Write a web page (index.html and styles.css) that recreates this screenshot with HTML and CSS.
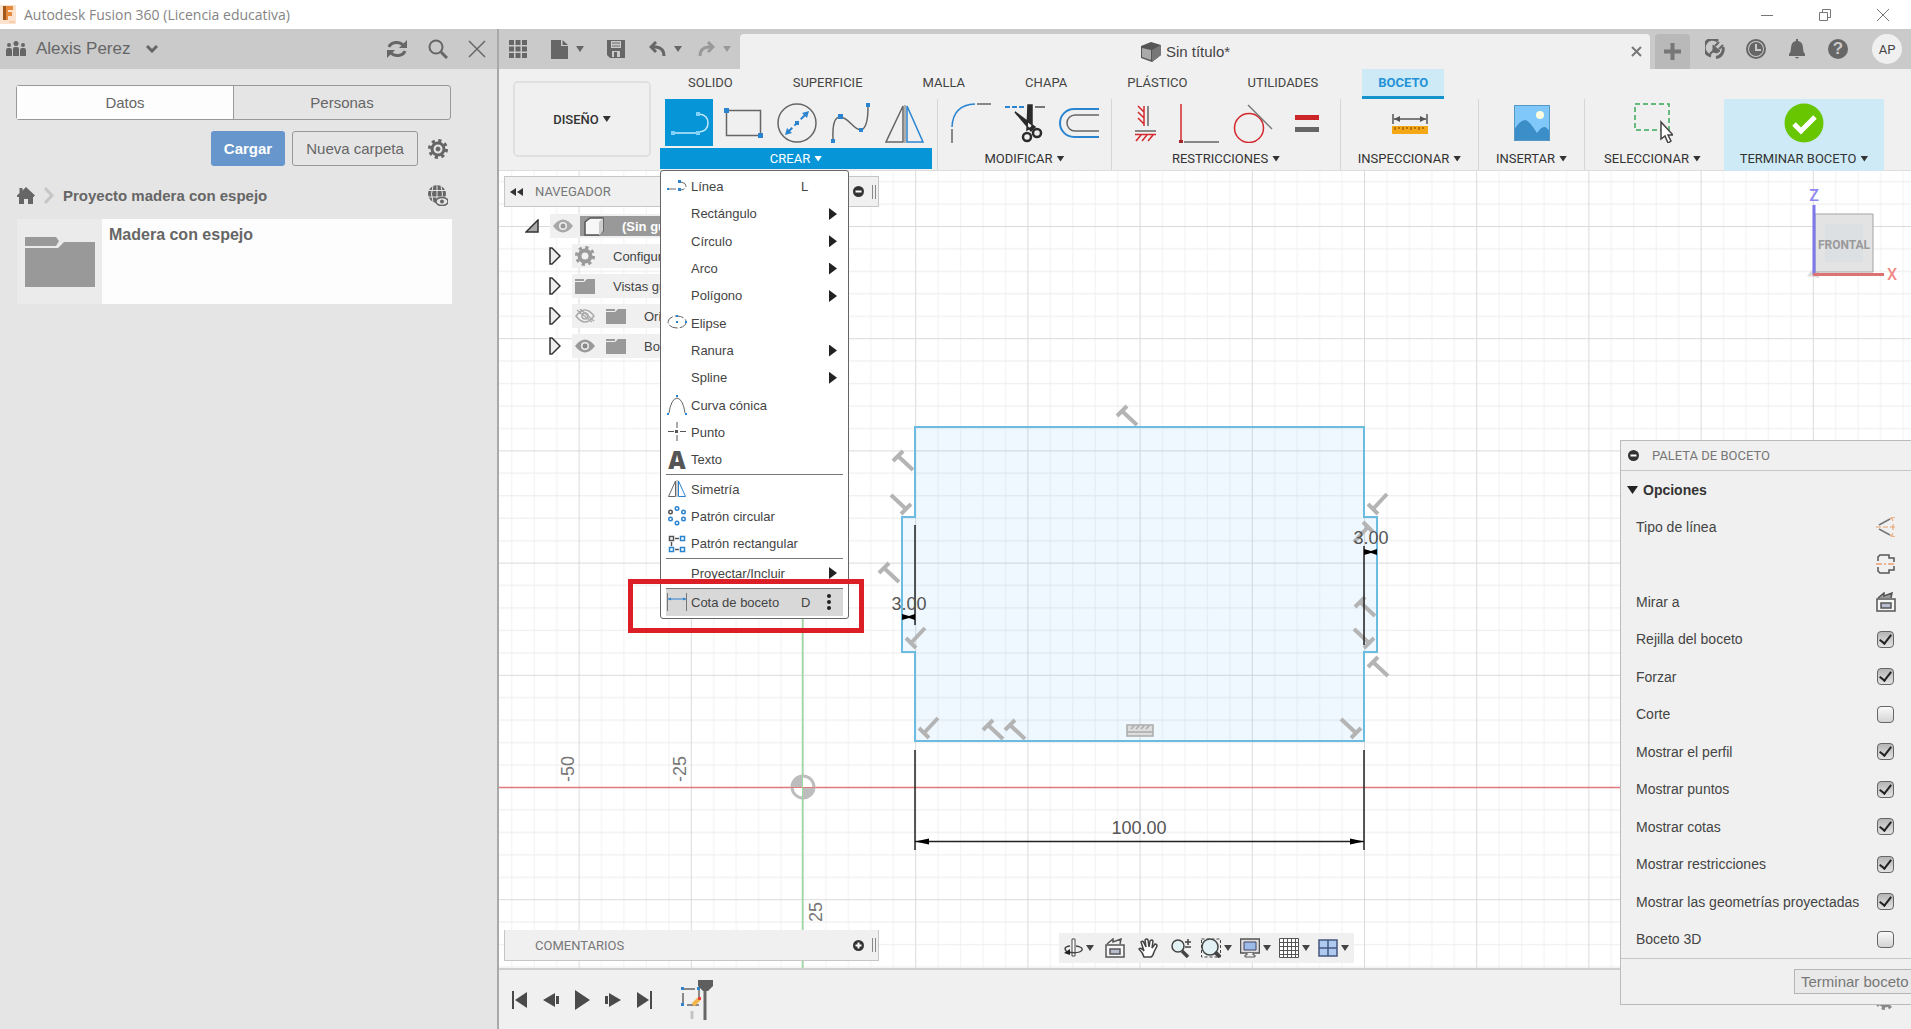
FILE: index.html
```html
<!DOCTYPE html>
<html lang="es">
<head>
    <meta charset="UTF-8">
    <meta name="viewport" content="width=device-width, initial-scale=1.0">
    <title>Autodesk Fusion 360</title>
    <link rel="stylesheet" href="styles.css">
</head>
<body>
    <header class="titlebar">
        <svg class="app-icon" width="16" height="19" viewBox="0 0 16 19"><rect width="16" height="19" fill="#fbe3cf"/><path d="M3 1h10v4H8v2h4v4H8v4H3z" fill="#e58a3c"/><path d="M3 1h3v14H3z" fill="#a4571b"/><path d="M9 17h6" stroke="#f0b98a"/></svg>
        <h1>Autodesk Fusion 360 (Licencia educativa)</h1>
        <div class="window-buttons">
            <button aria-label="Minimizar"><svg width="14" height="14"><path d="M1 7.500h12" stroke="#777"/></svg></button>
            <button aria-label="Restaurar"><svg width="14" height="14" fill="none" stroke="#777"><path d="M1.500 4.500h8v8h-8zM4.500 4V1.500h8v8H10"/></svg></button>
            <button aria-label="Cerrar"><svg width="14" height="14" stroke="#777"><path d="M1 1l12 12M13 1L1 13"/></svg></button>
        </div>
    </header>

    <div class="main">
        <aside class="data-panel">
            <div class="panel-top">
                <svg width="20" height="16" viewBox="0 0 20 16" fill="#666"><circle cx="3" cy="4" r="2"/><circle cx="10" cy="2.500" r="2.500"/><circle cx="17" cy="4" r="2"/><path d="M0 15V9q0-2 2-2h2q2 0 2 2v6zM7 15V8q0-2 2-2h2q2 0 2 2v7zM14 15V9q0-2 2-2h2q2 0 2 2v6z"/></svg>
                <button class="user">Alexis Perez <svg width="12" height="8" fill="none" stroke="#666" stroke-width="3"><path d="M1 1l5 5 5-5"/></svg></button>
                <button aria-label="Actualizar"><svg width="22" height="20" viewBox="0 0 22 20" fill="none" stroke="#666" stroke-width="3"><path d="M3 8a8 6.500 0 0 1 14-2M19 12a8 6.500 0 0 1-14 2"/><path d="M21 1v8h-8zM1 19v-8h8z" fill="#666" stroke="none"/></svg></button>
                <button aria-label="Buscar"><svg width="20" height="20" fill="none" stroke="#666"><circle cx="8" cy="8" r="6.500" stroke-width="2"/><path d="M13 13l6 6" stroke-width="3"/></svg></button>
                <button aria-label="Cerrar panel"><svg width="18" height="18" stroke="#666" stroke-width="1.500"><path d="M1 1l16 16M17 1L1 17"/></svg></button>
            </div>
            <div class="panel-tabs">
                <button class="active">Datos</button>
                <button>Personas</button>
            </div>
            <div class="panel-actions">
                <button class="upload">Cargar</button>
                <button class="new-folder">Nueva carpeta</button>
                <button aria-label="Ajustes"><svg width="20" height="20" viewBox="-10 -10 20 20" fill="none" stroke="#666"><circle r="6" stroke-width="3"/><circle r="8.500" stroke-width="3" stroke-dasharray="3.200 3.480"/><circle r="2" fill="#666"/></svg></button>
            </div>
            <nav class="breadcrumb">
                <a href="#" aria-label="Inicio"><svg width="18" height="17" fill="#666"><path d="M9 0l9 8.500-1.500 1.500H16v7h-5v-5H7v5H2v-7H0V8.500L2.500 6V1h3v2.500z"/></svg></a>
                <svg width="10" height="17" fill="none" stroke="#c6c6c6" stroke-width="3"><path d="M1 1l7 7.500-7 7.500"/></svg>
                <a href="#">Proyecto madera con espejo</a>
                <svg class="globe" width="20" height="21" fill="none" stroke="#666" stroke-width="2"><circle cx="9" cy="9" r="8" fill="#666"/><path d="M9 0v18M0 5.500h18M0 12h18M5 1q-3 8 0 16M13 1q3 8 0 16" stroke="#e5e5e5" stroke-width="1"/><ellipse cx="14" cy="16.500" rx="6" ry="4" fill="#e5e5e5" stroke-width="1.500"/><circle cx="14" cy="16.500" r="2" fill="#666" stroke="none"/></svg>
            </nav>
            <a href="#" class="folder-card">
                <span class="thumb"><svg width="70" height="51" fill="#999"><path d="M0 1h31l3 4-3 5H0zM0 12h33l6-6h31v45H0z"/></svg></span>
                <span class="folder-name">Madera con espejo</span>
            </a>
        </aside>

        <section class="workspace">
            <div class="quick-bar">
                <div class="quick-tools">
                    <button aria-label="Panel de datos"><svg width="18" height="18" stroke="#666" stroke-width="5" stroke-dasharray="5 1.500"><path d="M0 2.500h18M0 9h18M0 15.500h18"/></svg></button>
                    <button class="q-file" aria-label="Archivo"><svg width="17" height="19" fill="#666"><path d="M0 0h10v6h7v13H0zM11.500 0l5.500 5h-5.500z"/></svg><span class="caret"></span></button>
                    <button class="q-save" aria-label="Guardar"><svg width="18" height="18"><path d="M0 0h18v18H3l-3-3z" fill="#666"/><path d="M4 1h10v7H4z" fill="#cacaca"/><path d="M5 3h8M5 6h8" stroke="#666" stroke-width="1"/><path d="M5 11h8v6H5z" fill="#cacaca"/><path d="M7 12h3v5H7z" fill="#666"/></svg></button>
                    <button class="q-undo" aria-label="Deshacer"><svg width="17" height="16" fill="none" stroke="#666" stroke-width="3"><path d="M7 1L2 6l5 5M2 6h5q8 1 8 9"/></svg><span class="caret"></span></button>
                    <button class="q-redo" aria-label="Rehacer"><svg width="17" height="16" fill="none" stroke="#999" stroke-width="3"><path d="M10 1l5 5-5 5M15 6h-5q-8 1-8 9"/></svg><span class="caret"></span></button>
                </div>
                <div class="doc-tab">
                    <span class="doc-title">
                        <svg width="20" height="20"><path d="M0 4l10-4 10 3v10l-9 7L0 16z" fill="#555"/><path d="M1 6l9 2v10L1 15z" fill="#aaa"/><path d="M11 8l9-5v10l-9 7z" fill="#777"/></svg>
                        Sin título*
                    </span>
                    <button aria-label="Cerrar documento"><svg width="11" height="11" stroke="#777" stroke-width="2"><path d="M1 1l9 9M10 1l-9 9"/></svg></button>
                </div>
                <button class="add-tab" aria-label="Nuevo"><svg width="17" height="17" stroke="#777" stroke-width="4"><path d="M8.500 0v17M0 8.500h17"/></svg></button>
                <div class="quick-right">
                    <button aria-label="Extensiones"><svg width="20" height="20" fill="none" stroke="#666"><path d="M6 17a8.500 8.500 0 1 1 7-15M18 8a8.500 8.500 0 0 1-7 10.500" stroke-width="3"/><path d="M5 15l4-4M14 3l-4 4M18 6l-4 4" stroke-width="2"/><path d="M8 6l7 6-3 2-4-1z" fill="#666"/></svg></button>
                    <button aria-label="Estado de trabajos"><svg width="20" height="20" fill="none" stroke="#666"><circle cx="10" cy="10" r="9" stroke-width="2"/><circle cx="10" cy="10" r="7" fill="#666" stroke="none"/><path d="M10 5v6h5" stroke="#cacaca" stroke-width="2"/></svg></button>
                    <button aria-label="Notificaciones"><svg width="20" height="20" fill="#666"><path d="M9 0h2v2q5 1 5 7 0 4 2 6v2H2v-2q2-2 2-6 0-6 5-7zM8 18h4q-2 3-4 0z"/></svg></button>
                    <button aria-label="Ayuda" class="help"><span>?</span></button>
                    <button class="avatar">AP</button>
                </div>
            </div>

            <div class="ribbon">
                <button class="design">DISEÑO <span class="caret"></span></button>
                <div class="ribbon-body">
                    <nav class="ribbon-tabs">
                        <button>SOLIDO</button>
                        <button>SUPERFICIE</button>
                        <button>MALLA</button>
                        <button>CHAPA</button>
                        <button>PLÁSTICO</button>
                        <button>UTILIDADES</button>
                        <button class="active">BOCETO</button>
                    </nav>
                    <div class="groups">
                        <div class="group create">
                            <div class="tools">
                                <button class="active" aria-label="Línea"><svg width="40" height="40" fill="none" stroke="#c4e8fb" stroke-width="1.500"><path d="M4 30h24M30 11q9 1 9 9t-9 9"/><path d="M2 28h4v4H2zM27 28h4v4h-4zM27 9h4v4h-4z" fill="#7fd0fb" stroke="none"/></svg></button>
                                <button aria-label="Rectángulo"><svg width="40" height="40"><path d="M3.500 7.500h34v25h-34z" fill="none" stroke="#666" stroke-width="1.500"/><path d="M1 5h5v5H1zM35 30h5v5h-5z" fill="#2a84d0"/></svg></button>
                                <button aria-label="Círculo"><svg width="40" height="40"><circle cx="20" cy="20" r="19" fill="none" stroke="#666" stroke-width="1.500"/><path d="M11 29l18-18" stroke="#2a84d0" stroke-width="2" stroke-dasharray="6 3"/><path d="M18 18h4v4h-4zM32 8l-2 7-5-5zM8 32l2-7 5 5z" fill="#2a84d0"/></svg></button>
                                <button aria-label="Spline"><svg width="40" height="40"><path d="M2 36Q1 14 9 14C18 14 22 27 30 27Q37 25 37 4" fill="none" stroke="#666" stroke-width="1.500"/><path d="M0 36h4v4H0zM7 11h5v5H7zM28 25h4v4h-4zM35 0h4v4h-4z" fill="#2a84d0"/></svg></button>
                                <button aria-label="Simetría"><svg width="40" height="40" fill="none" stroke-width="1.500"><path d="M18 3v36H1z" stroke="#666"/><path d="M22 3v36h16z" stroke="#2a84d0"/><path d="M20 2v38" stroke="#999"/></svg></button>
                            </div>
                            <button class="group-label">CREAR<span class="caret"></span></button>

                            <div class="menu">
                                <button><svg width="20" height="20" fill="none" stroke="#666"><path d="M1 12h11M14 5q5 1 5 4t-5 4" stroke-dasharray="8 2"/><path d="M0 11h2v2H0zM11 11h3v3h-3zM11 3h3v3h-3z" fill="#2a84d0" stroke="none"/></svg><span>Línea</span><kbd>L</kbd></button>
                                <button class="sub"><i></i><span>Rectángulo</span></button>
                                <button class="sub"><i></i><span>Círculo</span></button>
                                <button class="sub"><i></i><span>Arco</span></button>
                                <button class="sub"><i></i><span>Polígono</span></button>
                                <button><svg width="20" height="20" fill="none" stroke="#666"><ellipse cx="10" cy="9" rx="9" ry="6" stroke-dasharray="9 2"/><path d="M9 2h2v2H9zM9 8h2v2H9zM18 8h2v2h-2z" fill="#2a84d0" stroke="none"/></svg><span>Elipse</span></button>
                                <button class="sub"><i></i><span>Ranura</span></button>
                                <button class="sub"><i></i><span>Spline</span></button>
                                <button><svg width="20" height="20" fill="none" stroke="#666"><path d="M2 18Q4 4 10 3q6 1 8 15"/><path d="M9 0h2v2H9zM0 18h2v2H0zM18 18h2v2h-2z" fill="#2a84d0" stroke="none"/></svg><span>Curva cónica</span></button>
                                <button><svg width="20" height="20" stroke="#555"><path d="M10 0v6M10 13v6M1 9.500h6M13 9.500h6"/><path d="M8 8h3v3H8z" fill="#555" stroke="none"/></svg><span>Punto</span></button>
                                <button><b class="letter">A</b><span>Texto</span></button>
                                <hr>
                                <button><svg width="20" height="20" fill="none"><path d="M8.500 2v15.500H1.500z" stroke="#666"/><path d="M11.500 2v15.500h7z" stroke="#2a84d0"/><path d="M10 1v17" stroke="#999"/></svg><span>Simetría</span></button>
                                <button><svg width="20" height="20" fill="none" stroke="#2a84d0" stroke-width="1.500"><circle cx="10" cy="2.500" r="1.750"/><circle cx="16.500" cy="6" r="1.750"/><circle cx="16.500" cy="13" r="1.750"/><circle cx="10" cy="17" r="1.750"/><circle cx="3.500" cy="13" r="1.750"/><circle cx="3.500" cy="6" r="1.750" stroke="#555"/></svg><span>Patrón circular</span></button>
                                <button><svg width="20" height="20" fill="none" stroke="#2a84d0" stroke-width="1.500"><path d="M13.500 2.500h4v4h-4zM13.500 13.500h4v4h-4zM2.500 13.500h4v4h-4z"/><path d="M2.500 2.500h4v4h-4zM8 4.500h4M8 15.500h4M4.500 8v4" stroke="#555"/></svg><span>Patrón rectangular</span></button>
                                <hr>
                                <button class="sub"><i></i><span>Proyectar/Incluir</span></button>
                                <hr>
                                <button class="hover"><svg width="20" height="20" fill="none"><path d="M.5 1v18M19.500 1v18" stroke="#777"/><path d="M1 7h18" stroke="#2a84d0"/><path d="M4 5.500L1 7l3 1.500M16 5.500L19 7l-3 1.500" fill="#2a84d0"/></svg><span>Cota de boceto</span><kbd>D</kbd><svg class="dots" width="4" height="16" fill="#222"><circle cx="2" cy="2" r="2"/><circle cx="2" cy="8" r="2"/><circle cx="2" cy="14" r="2"/></svg></button>
                                <div class="highlight"></div>
                            </div>
                        </div>

                        <div class="group modify">
                            <div class="tools">
                                <button aria-label="Empalme"><svg width="40" height="40" fill="none" stroke-width="1.500"><path d="M1 24Q2 2 24 1" stroke="#2a84d0"/><path d="M1 26v14M26 1h14" stroke="#666"/></svg></button>
                                <button aria-label="Recortar"><svg width="40" height="40" fill="none"><path d="M0 4h21" stroke="#2a84d0" stroke-width="2" stroke-dasharray="5 2"/><path d="M30 4h10" stroke="#777" stroke-width="2"/><path d="M10 9l16 19 4-4L10 9zM23 2h4v22l-5 3z" fill="#2b2b2b" stroke="#2b2b2b" stroke-width="1.500"/><circle cx="22" cy="34" r="4" stroke="#2b2b2b" stroke-width="2.500"/><circle cx="32" cy="30" r="4" stroke="#2b2b2b" stroke-width="2.500"/></svg></button>
                                <button aria-label="Desfase"><svg width="40" height="40" fill="none" stroke-width="2"><path d="M40 6H15a14 14 0 0 0 0 28h25" stroke="#2a84d0"/><path d="M40 12H16a8 8 0 0 0 0 16h24" stroke="#666" stroke-width="1.500"/></svg></button>
                            </div>
                            <button class="group-label">MODIFICAR <span class="caret"></span></button>
                        </div>

                        <div class="group constraints">
                            <div class="tools">
                                <button aria-label="Horizontal/Vertical"><svg width="40" height="40" fill="none" stroke="#d3282e" stroke-width="1.500"><path d="M19 3v20M19 9l-6-6M19 15l-6-6M19 21l-6-6M10 31.500h21M16 32l-5 6M22 32l-5 6M28 32l-5 6"/><path d="M23 3v20M10 28h21" stroke="#666"/></svg></button>
                                <button aria-label="Coincidente"><svg width="40" height="40"><path d="M2 1v36" stroke="#d3282e" stroke-width="1.500"/><path d="M5 39h35" stroke="#666" stroke-width="1.500"/><path d="M0 37h4v4H0z" fill="#a3262b"/></svg></button>
                                <button aria-label="Tangente"><svg width="40" height="40" fill="none"><circle cx="16" cy="25" r="14.500" stroke="#d3282e" stroke-width="1.500"/><path d="M15 2l24 24" stroke="#777" stroke-width="1.500"/></svg></button>
                                <button aria-label="Igual"><svg width="40" height="40"><path d="M8 12h24v5H8z" fill="#cc2529"/><path d="M8 24h24v5H8z" fill="#666"/></svg></button>
                            </div>
                            <button class="group-label">RESTRICCIONES <span class="caret"></span></button>
                        </div>

                        <div class="group inspect">
                            <div class="tools">
                                <button aria-label="Medir"><svg width="40" height="40"><path d="M3 11v10M37 11v10M4 16h32" stroke="#555" stroke-width="1.500"/><path d="M4 16l6-3v6zM36 16l-6-3v6z" fill="#555"/><path d="M2 23h36v8H2z" fill="#f5a816"/><path d="M5 24v3M9 24v2M13 24v3M17 24v2M21 24v3M25 24v2M29 24v3M33 24v2" stroke="#6b4300"/></svg></button>
                            </div>
                            <button class="group-label">INSPECCIONAR <span class="caret"></span></button>
                        </div>

                        <div class="group insert">
                            <div class="tools">
                                <button aria-label="Insertar imagen"><svg width="40" height="40"><path d="M2 2h36v36H2z" fill="#80c8fa"/><path d="M2 27q6-10 11-10 4 0 12 13 4-6 7-6t6 5v9H2z" fill="#3c8ec8"/><circle cx="28" cy="12" r="4" fill="#fdfbe0"/><path d="M2.500 2.500h35v35h-35z" fill="none" stroke="#5597c5"/></svg></button>
                            </div>
                            <button class="group-label">INSERTAR <span class="caret"></span></button>
                        </div>

                        <div class="group select">
                            <div class="tools">
                                <button aria-label="Seleccionar"><svg width="40" height="40"><path d="M2 1h34v26H2z" fill="none" stroke="#38a659" stroke-width="1.500" stroke-dasharray="5 3"/><path d="M28 19v17l4-3 3 7 3-2-3-6h5z" fill="#fff" stroke="#444" stroke-width="1.500"/></svg></button>
                            </div>
                            <button class="group-label">SELECCIONAR <span class="caret"></span></button>
                        </div>

                        <div class="group finish">
                            <div class="tools">
                                <button aria-label="Terminar"><svg width="40" height="40"><circle cx="20" cy="20" r="19.500" fill="#67c600"/><path d="M10 21l7 7 14-14" fill="none" stroke="#fff" stroke-width="5"/></svg></button>
                            </div>
                            <button class="group-label">TERMINAR BOCETO <span class="caret"></span></button>
                        </div>
                    </div>
                </div>
            </div>

            <div class="canvas">
                <svg class="sketch" width="100%" height="100%">
                    <defs>
                        <pattern id="grid" width="112.200" height="112.200" patternUnits="userSpaceOnUse">
                            <path d="M22.900 0v113M45.400 0v113M67.800 0v113M90.300 0v113" stroke="#f1f1f1"/>
                            <path d="M0 22.900h113M0 45.400h113M0 67.800h113M0 90.300h113" stroke="#ebebeb"/>
                            <path d="M.5 0v113M0 .5h113" stroke="#dadada"/>
                        </pattern>
                        <g id="perp"><path d="M-5 5L5-5M0 0l15 14" stroke="#b4b4b4" stroke-width="4"/></g>
                    </defs>
                    <!-- everything below is drawn around the sketch origin -->
                    <g transform="translate(304 616)">
                        <rect x="-304" y="-617" width="3000" height="2000" fill="url(#grid)"/>
                        <path d="M-304 .5H3000" stroke="#e2797d" stroke-width="1.500"/>
                        <path d="M-.5-617V1000" stroke="#9bdb9e" stroke-width="1.500"/>
                        <circle r="11" fill="#fff" stroke="#bdbdbd" stroke-width="3"/>
                        <path d="M0 0V-12A12 12 0 0 0-12 0zM0 0v12A12 12 0 0 0 12 0z" fill="#bdbdbd"/>
                        <path d="M-12 .5h24" stroke="#e2797d"/><path d="M-.5-12v24" stroke="#9bdb9e"/>

                        <path class="profile" d="M112-360H561V-270H574V-135H561V-46H112V-135H99V-270H112Z"/>
                        <use href="#perp" x="319" y="-376"/>
                        <use href="#perp" x="95" y="-331"/>
                        <use href="#perp" x="81" y="-219"/>
                        <use href="#perp" x="557" y="-185"/>
                        <use href="#perp" x="570" y="-125"/>
                        <use href="#perp" x="185" y="-62"/>
                        <use href="#perp" x="207" y="-62"/>
                        <use href="#perp" transform="translate(103 -278) rotate(180)"/>
                        <use href="#perp" transform="translate(566 -144) rotate(180)"/>
                        <use href="#perp" transform="translate(553 -54) rotate(180)"/>
                        <use href="#perp" transform="translate(108 -144) rotate(-90)"/>
                        <use href="#perp" transform="translate(570 -278) rotate(-90)"/>
                        <use href="#perp" transform="translate(121 -54) rotate(-90)"/>
                        <use href="#perp" transform="translate(565 -260) rotate(90)"/>
                        <path d="M324-62h26v11h-26zM324-55h26M328-58l3-3M333-58l3-3M338-58l3-3M343-58l3-3" fill="#ddd" stroke="#aaa" stroke-width="1.500"/>

                        <g stroke="#222" stroke-width="1.500">
                            <path d="M112-262v100M561-241v99M112-37V63M561-37V63M112 54.500h449M99-170h13M561-235h13"/>
                            <path d="M112 54.500l14-3v6zM561 54.500l-14-3v6zM99-173l7 2 6-2v6l-6-2-7 2zM561-238l7 2 6-2v6l-6-2-7 2z" fill="#000" stroke="none"/>
                        </g>
                        <g class="dims">
                            <text x="106" y="-177">3.00</text>
                            <text x="568" y="-243">3.00</text>
                            <text x="336" y="47">100.00</text>
                        </g>
                        <g class="scale">
                            <text transform="translate(-229 -5) rotate(-90)">-50</text>
                            <text transform="translate(-117 -5) rotate(-90)">-25</text>
                            <text transform="translate(19 135) rotate(-90)">25</text>
                        </g>
                    </g>
                </svg>

                <div class="browser">
                    <div class="bar">
                        <svg width="13" height="8" fill="#333"><path d="M6 0v8L0 4zM13 0v8L7 4z"/></svg>
                        <h2>NAVEGADOR</h2>
                        <button aria-label="Contraer"><svg width="11" height="11"><circle cx="5.500" cy="5.500" r="5.500" fill="#333"/><path d="M2.500 5.500h6" stroke="#fff" stroke-width="2"/></svg></button>
                        <span class="grip"></span>
                    </div>
                    <ul class="tree">
                        <li class="root">
                            <svg class="arrow" width="14" height="14"><path d="M13 1v12H1z" fill="#aaa" stroke="#333" stroke-width="1.500"/></svg>
                            <span class="row"><svg width="20" height="14"><path d="M0 7q10-13 20 0-10 13-20 0z" fill="#a8a8a8"/><circle cx="10" cy="7" r="4" fill="#eee"/><circle cx="10" cy="7" r="2.500" fill="#999"/></svg><b><svg width="20" height="19"><path d="M1 5l5-4h13v13l-4 4H1z" fill="#f7f7f7" stroke="#555" stroke-width="1.500"/><path d="M15 5v13h1l3-4V1z" fill="#ccc"/></svg>(Sin guardar)</b></span>
                        </li>
                        <li>
                            <svg class="arrow" width="12" height="18"><path d="M1 1v16h2l8-8-8-8z" fill="#eee" stroke="#333" stroke-width="1.500"/></svg>
                            <span class="row"><svg width="20" height="20" viewBox="-10 -10 20 20" fill="none" stroke="#999"><circle r="5.500" stroke-width="4"/><circle r="8.500" stroke-width="3" stroke-dasharray="3.200 3.480"/></svg>Configuración</span>
                        </li>
                        <li>
                            <svg class="arrow" width="12" height="18"><path d="M1 1v16h2l8-8-8-8z" fill="#eee" stroke="#333" stroke-width="1.500"/></svg>
                            <span class="row"><svg width="20" height="17" fill="#999"><path d="M0 1h9v2H0zM0 4h9l3-3h8v15H0z"/></svg>Vistas guardadas</span>
                        </li>
                        <li>
                            <svg class="arrow" width="12" height="18"><path d="M1 1v16h2l8-8-8-8z" fill="#eee" stroke="#333" stroke-width="1.500"/></svg>
                            <span class="row"><svg width="20" height="14" fill="none" stroke="#aaa" stroke-width="1.500"><path d="M1 7q9-12 18 0-9 12-18 0zM2 1l15 12M5 0l14 12"/><circle cx="10" cy="7" r="3"/></svg><svg width="20" height="17" fill="#999"><path d="M0 1h9v2H0zM0 4h9l3-3h8v15H0z"/></svg>Origen</span>
                        </li>
                        <li>
                            <svg class="arrow" width="12" height="18"><path d="M1 1v16h2l8-8-8-8z" fill="#eee" stroke="#333" stroke-width="1.500"/></svg>
                            <span class="row"><svg width="20" height="14"><path d="M0 7q10-13 20 0-10 13-20 0z" fill="#999"/><circle cx="10" cy="7" r="4" fill="#eee"/><circle cx="10" cy="7" r="2.500" fill="#888"/></svg><svg width="20" height="17" fill="#999"><path d="M0 1h9v2H0zM0 4h9l3-3h8v15H0z"/></svg>Bocetos</span>
                        </li>
                    </ul>
                </div>

                <svg class="viewcube" width="110" height="110">
                    <path d="M6 90l12-14v16z" fill="#ddd"/>
                    <path d="M14 28h58v58H14z" fill="#e3e3e3" stroke="#a3a3a3"/>
                    <path d="M24 38h38v38H24z" fill="#dde0e3"/>
                    <path d="M13 19v70" stroke="#7d78ea" stroke-width="3"/>
                    <path d="M12 88.500h71" stroke="#dd7272" stroke-width="3"/>
                    <text x="13" y="15" fill="#8d86f2">Z</text>
                    <text x="91" y="94" fill="#f28a8a">X</text>
                    <text class="face" x="43" y="63">FRONTAL</text>
                </svg>

                <div class="bar comments">
                    <h2>COMENTARIOS</h2>
                    <button aria-label="Expandir"><svg width="11" height="11"><circle cx="5.500" cy="5.500" r="5.500" fill="#333"/><path d="M2.500 5.500h6M5.500 2.500v6" stroke="#fff" stroke-width="2"/></svg></button>
                    <span class="grip"></span>
                </div>

                <div class="navbar">
                    <button aria-label="Órbita"><svg width="20" height="20" fill="none" stroke="#444" stroke-width="1.500"><path d="M9 1h3v17H9z" fill="#fff" stroke-width="1"/><path d="M4 14q-5-5 3-6M13 8q7 1 6 4-2 4-15 2"/><path d="M7 11v6l-6-2z" fill="#222" stroke="none"/></svg><span class="caret"></span></button>
                    <button aria-label="Mirar a"><svg width="20" height="20" fill="#f7f7f7" stroke="#555" stroke-width="1.500"><path d="M1 7h18v12H1z"/><path d="M5 11h10v5H5z" fill="#b8bdd0"/><path d="M2 6l6-5v3l8-3-1 5" fill="none"/></svg></button>
                    <button aria-label="Encuadre"><svg width="20" height="20" fill="#fff" stroke="#444" stroke-width="1.500"><path d="M6 19q-1-4-5-8 2-2 5 2L3 4q2-2 3 1l2 4-1-7q2-2 3 0l1 7 1-6q2-2 3 0l-1 7 3-4q2 0 2 2l-3 6q-1 4-3 5z"/></svg></button>
                    <button aria-label="Zoom"><svg width="20" height="20" fill="none" stroke="#444"><circle cx="7" cy="8" r="6" fill="#e2f1f4" stroke-width="1.500"/><path d="M11 13l6 6" stroke-width="3.500"/><path d="M14 4h6M17 1v6M14 9h6" stroke-width="1.500"/></svg></button>
                    <button aria-label="Ventana de zoom"><svg width="20" height="20" fill="none" stroke="#444"><path d="M.5 1h19v18H.5z" stroke-dasharray="3 2"/><circle cx="9" cy="9" r="8" fill="#e2f1f4" stroke-width="1.500"/><path d="M14 14l5 5" stroke-width="4"/></svg><span class="caret"></span></button>
                    <button aria-label="Visualización"><svg width="20" height="20" stroke="#555"><path d="M.5 1h19v14H.5z" fill="#ddd" stroke-width="1.500"/><path d="M4 4h12v8H4z" fill="#9dbbe8" stroke="#446"/><path d="M7 15v2H5v2h10v-2h-2v-2" fill="#eee"/></svg><span class="caret"></span></button>
                    <button aria-label="Rejilla"><svg width="20" height="20" fill="#fff" stroke="#555"><path d="M.5.5h19v19H.5zM4.500 0v20M8.500 0v20M12.500 0v20M16.500 0v20M0 4.500h20M0 8.500h20M0 12.500h20M0 16.500h20"/></svg><span class="caret"></span></button>
                    <button aria-label="Ventanas gráficas"><svg width="20" height="20" fill="#aecaf1" stroke="#44577d" stroke-width="1.500"><path d="M1 2h18v16H1zM10 2v16M1 10h18"/></svg><span class="caret"></span></button>
                </div>

                <form class="palette">
                    <div class="palette-title">
                        <svg width="11" height="11"><circle cx="5.500" cy="5.500" r="5.500" fill="#333"/><path d="M2.500 5.500h6" stroke="#fff" stroke-width="2"/></svg>
                        <h2>PALETA DE BOCETO</h2>
                    </div>
                    <h3><svg width="11" height="8" fill="#222"><path d="M0 0h11L5.500 8z"/></svg>Opciones</h3>
                    <div class="options">
                        <div><span>Tipo de línea</span><button type="button" aria-label="Construcción"><svg width="20" height="20" fill="none" stroke="#777"><path d="M3 8l11-6M3 12l11 6" stroke-width="1.500"/><path d="M0 10h20" stroke="#e9a06b" stroke-dasharray="5 2"/><path d="M14 2l5-2M15 0l2 4M14 18l5 2M15 20l2-4" stroke="#e9a06b"/><path d="M17 7v6" stroke="#e9a06b"/></svg></button></div>
                        <div><button type="button" aria-label="Línea central"><svg width="20" height="20" fill="none" stroke="#555" stroke-width="1.500"><path d="M2 7V3l2-2h9v3h5v4M2 13v4l2 2h9v-3h5v-4"/><path d="M0 10h20" stroke="#e9a06b" stroke-dasharray="6 2 2 2"/></svg></button></div>
                        <div><span>Mirar a</span><button type="button" aria-label="Mirar a"><svg width="20" height="20" fill="#f7f7f7" stroke="#555" stroke-width="1.500"><path d="M1 7h18v12H1z"/><path d="M5 11h10v5H5z" fill="#b8bdd0"/><path d="M2 6l6-5v3l8-3-1 5" fill="#999"/></svg></button></div>
                        <label>Rejilla del boceto<input type="checkbox" checked></label>
                        <label>Forzar<input type="checkbox" checked></label>
                        <label>Corte<input type="checkbox"></label>
                        <label>Mostrar el perfil<input type="checkbox" checked></label>
                        <label>Mostrar puntos<input type="checkbox" checked></label>
                        <label>Mostrar cotas<input type="checkbox" checked></label>
                        <label>Mostrar restricciones<input type="checkbox" checked></label>
                        <label>Mostrar las geometrías proyectadas<input type="checkbox" checked></label>
                        <label>Boceto 3D<input type="checkbox"></label>
                    </div>
                    <div class="palette-foot"><button type="button">Terminar boceto</button></div>
                </form>
            </div>

            <footer class="timeline">
                <button aria-label="Inicio"><svg width="16" height="18" fill="#4a4a4a"><path d="M0 0h2v18H0zM15 1v16L3 9z"/></svg></button>
                <button aria-label="Anterior"><svg width="16" height="18" fill="#4a4a4a"><path d="M12 2v14L0 9zM13 5h3v8h-3z"/></svg></button>
                <button aria-label="Reproducir"><svg width="16" height="20" fill="#4a4a4a"><path d="M1 0v20l15-10z"/></svg></button>
                <button aria-label="Siguiente"><svg width="16" height="18" fill="#4a4a4a"><path d="M4 2v14l12-7zM0 5h3v8H0z"/></svg></button>
                <button aria-label="Fin"><svg width="16" height="18" fill="#4a4a4a"><path d="M14 0h2v18h-2zM1 1v16l12-8z"/></svg></button>
                <svg class="feature" width="34" height="42" fill="none"><path d="M2 10h16v16H2z" stroke="#666" stroke-width="1.500" stroke-dasharray="12 4"/><path d="M0 8h3v3H0zM16 8h3v3h-3zM0 24h3v3H0z" fill="#2a84d0"/><path d="M12 26l6-6" stroke="#f3b54c" stroke-width="4"/><path d="M17 18h3v3h-3z" fill="#e8433f"/><path d="M11 32v8" stroke="#c4c4c4" stroke-width="3"/><path d="M24 8v33" stroke="#666" stroke-width="3"/><path d="M17 1h15v6l-5 5h-5l-5-5z" fill="#5e5e5e"/></svg>
                <button class="settings" aria-label="Ajustes de la línea de tiempo"><svg width="20" height="20" viewBox="-10 -10 20 20" fill="none" stroke="#888"><circle r="6" stroke-width="3"/><circle r="8.500" stroke-width="3" stroke-dasharray="3.200 3.480"/></svg></button>
            </footer>
        </section>
    </div>
</body>
</html>
```

FILE: styles.css
```css
* {
    box-sizing: border-box;
}

body {
    margin: 0;
    height: 100vh;
    display: flex;
    flex-direction: column;
    overflow: hidden;
    font-family: "Liberation Sans", Arial, sans-serif;
    font-size: 13px;
    color: #444;
    background-color: #fff;
}

button {
    display: flex;
    align-items: center;
    justify-content: center;
    padding: 0;
    border: none;
    background: none;
    color: inherit;
    font: inherit;
    cursor: pointer;
}

a {
    color: inherit;
    text-decoration: none;
}

h1, h2, h3 {
    margin: 0;
    font-size: inherit;
    font-weight: normal;
}

svg {
    display: block;
    flex-shrink: 0;
}

.caret {
    width: 8px;
    height: 6px;
    margin-left: 4px;
    background-color: currentColor;
    clip-path: polygon(0 0, 100% 0, 50% 100%);
}

/* window title */
.titlebar {
    display: flex;
    align-items: center;
    height: 29px;
    padding-right: 21px;
}

.titlebar h1 {
    flex: 1;
    padding-left: 8px;
    font-family: "Open Sans", sans-serif;
    font-size: 14px;
    color: #858585;
}

.window-buttons {
    display: flex;
    gap: 44px;
}

.main {
    flex: 1;
    display: flex;
    min-height: 0;
}

/* data panel */
.data-panel {
    flex: 0 0 499px;
    border-right: 2px solid #a9a9a9;
    background-color: #e5e5e5;
    font-size: 15px;
    color: #666;
}

.panel-top {
    display: flex;
    align-items: center;
    gap: 20px;
    height: 40px;
    padding: 0 11px 0 6px;
    background-color: #cacaca;
}

.user {
    flex: 1;
    justify-content: flex-start;
    gap: 16px;
    margin-left: -10px;
    font-size: 17px;
}

.panel-tabs {
    display: flex;
    height: 35px;
    margin: 16px 46px 11px 16px;
    border: 1px solid #999;
    border-radius: 3px;
}

.panel-tabs button {
    flex: 1;
}

.panel-tabs .active {
    border-right: 1px solid #999;
    background-color: #fdfdfd;
}

.panel-actions {
    display: flex;
    justify-content: flex-end;
    gap: 7px;
    height: 35px;
    padding-right: 49px;
}

.upload {
    width: 74px;
    border-radius: 3px;
    background-color: #6696cb;
    color: #fff;
    font-weight: bold;
}

.new-folder {
    width: 126px;
    margin-right: 3px;
    border: 1px solid #999;
    border-radius: 3px;
}

.breadcrumb {
    display: flex;
    align-items: center;
    gap: 9px;
    height: 53px;
    padding: 6px 49px 0 17px;
    font-weight: bold;
}

.globe {
    margin-left: auto;
}

.folder-card {
    display: flex;
    height: 85px;
    margin: 0 45px 0 17px;
    background-color: #fdfdfd;
}

.thumb {
    display: flex;
    align-items: center;
    width: 85px;
    padding-left: 8px;
    background-color: #ebebeb;
}

.folder-name {
    padding: 7px;
    font-size: 16px;
    font-weight: bold;
}

/* workspace */
.workspace {
    flex: 1;
    display: flex;
    flex-direction: column;
    min-width: 0;
}

.quick-bar {
    display: flex;
    align-items: flex-end;
    height: 40px;
    background-color: #cacaca;
    color: #666;
}

.quick-tools {
    display: flex;
    align-items: center;
    width: 241px;
    height: 40px;
    padding-left: 10px;
}

.quick-tools .caret {
    margin-left: 8px;
}

.q-file {
    margin-left: 24px;
}

.q-save {
    margin-left: 23px;
}

.q-undo {
    margin-left: 24px;
}

.q-redo {
    margin-left: 16px;
    color: #999;
}

.doc-tab {
    flex: 1;
    display: flex;
    align-items: center;
    height: 35px;
    padding-right: 8px;
    border-radius: 4px 4px 0 0;
    background-color: #f0f0f0;
}

.doc-title {
    flex: 1;
    display: flex;
    align-items: center;
    justify-content: center;
    gap: 5px;
    font-size: 15px;
    color: #444;
}

.add-tab {
    width: 35px;
    height: 35px;
    margin-left: 5px;
    border-radius: 4px 4px 0 0;
    background-color: #b9b9b9;
}

.quick-right {
    display: flex;
    align-items: center;
    gap: 21px;
    height: 40px;
    padding: 0 9px 0 15px;
}

.help {
    width: 20px;
    height: 20px;
    border-radius: 50%;
    background-color: #666;
    color: #cacaca;
    font-size: 17px;
    font-weight: bold;
}

.avatar {
    width: 30px;
    height: 30px;
    margin-left: 3px;
    border-radius: 50%;
    background-color: #f0f0f0;
    font-family: Roboto, sans-serif;
    color: #444;
}

/* ribbon */
.ribbon {
    display: flex;
    height: 102px;
    border-bottom: 1px solid #ddd;
    background-color: #f0f0f0;
    font-family: Roboto, sans-serif;
}

.design {
    width: 138px;
    height: 76px;
    margin: 12px 9px 0 14px;
    border: 2px solid #e0e0e0;
    border-radius: 5px;
    font-weight: 500;
    color: #333;
}

.ribbon-tabs {
    display: flex;
    gap: 28px;
    padding-left: 12px;
}

.ribbon-tabs button {
    height: 30px;
    padding: 0 16px;
    border-bottom: 3px solid transparent;
}

.ribbon-tabs .active {
    border-bottom-color: #1493cd;
    background-color: #cdeaf6;
    color: #2492d6;
    font-weight: bold;
}

.groups {
    display: flex;
    align-items: flex-start;
}

.group {
    display: flex;
    flex-direction: column;
    gap: 2px;
    height: 71px;
    border-right: 1px solid #d6d6d6;
    color: #333;
}

.tools {
    display: flex;
    justify-content: center;
    gap: 6px;
}

.tools button {
    width: 48px;
    height: 47px;
}

.tools .active {
    background-color: #0696d7;
}

.group-label {
    height: 21px;
}

.create {
    position: relative;
    width: 272px;
    margin-right: 5px;
    border-right: none;
}

.create .tools {
    padding-left: 2px;
}

.create .group-label {
    background-color: #0696d7;
    color: #fff;
}

.modify {
    width: 175px;
    border-left: 1px solid #d6d6d6;
}

.constraints {
    width: 229px;
}

.inspect {
    width: 138px;
}

.insert {
    width: 106px;
}

.select {
    width: 135px;
    border-right: none;
}

.finish {
    width: 160px;
    height: 72px;
    margin-left: 4px;
    border-right: none;
    background-color: #cdeaf6;
}

/* create menu */
.menu {
    position: absolute;
    top: 71px;
    left: 0;
    z-index: 10;
    display: flex;
    flex-direction: column;
    width: 189px;
    height: 449px;
    padding: 2px 5px;
    border: 1px solid #666;
    border-radius: 3px;
    background-color: #fff;
    font-family: "Liberation Sans", Arial, sans-serif;
    color: #444;
}

.menu button {
    flex: 1;
    justify-content: flex-start;
    gap: 4px;
    padding-left: 1px;
}

.menu i,
.menu .letter {
    width: 20px;
    text-align: center;
}

.menu .letter {
    font-family: "Open Sans", sans-serif;
    font-size: 24px;
    font-weight: 800;
    line-height: 20px;
    color: #555;
}

.menu span {
    flex: 1;
    text-align: left;
    white-space: nowrap;
}

.menu kbd {
    width: 12px;
    margin-right: 30px;
    font: inherit;
    text-align: left;
}

.menu .sub::after {
    content: "";
    width: 8px;
    height: 12px;
    margin-right: 6px;
    background-color: #222;
    clip-path: polygon(0 0, 100% 50%, 0 100%);
}

.menu hr {
    width: 100%;
    height: 1px;
    margin: 1px 0 0;
    border: none;
    background-color: #777;
}

.menu .hover {
    background-color: #d8d8d8;
}

.menu .hover kbd {
    margin-right: 10px;
}

.menu .dots {
    margin-right: 12px;
}

.highlight {
    position: absolute;
    top: 408px;
    left: -33px;
    width: 236px;
    height: 54px;
    border: 5px solid #dc1f26;
}

/* canvas */
.canvas {
    position: relative;
    flex: 1;
    border-bottom: 2px solid #cfcfcf;
}

.sketch {
    position: absolute;
    inset: 0;
}

.profile {
    fill: rgba(30, 150, 250, 0.07);
    stroke: #6bbce0;
    stroke-width: 2px;
}

.dims text {
    font-size: 18px;
    text-anchor: middle;
    fill: #555;
}

.scale text {
    font-size: 18px;
    fill: #777;
}

.bar {
    display: flex;
    align-items: center;
    height: 31px;
    padding: 0 2px 0 5px;
    border: 1px solid #c6c6c6;
    background-color: #f0f0f0;
    font-family: Roboto, sans-serif;
    font-size: 13px;
    color: #777;
}

.bar h2 {
    flex: 1;
    padding-left: 12px;
}

.grip {
    width: 4px;
    height: 14px;
    margin-left: 8px;
    border: solid #888;
    border-width: 0 1px;
}

.browser {
    position: absolute;
    top: 5px;
    left: 5px;
    width: 375px;
}

.comments {
    position: absolute;
    bottom: 7px;
    left: 5px;
    width: 375px;
    border-top: none;
}

.comments h2 {
    padding-left: 25px;
}

.tree {
    width: 158px;
    margin: 7px 0 0;
    padding: 0;
    list-style: none;
}

.tree li {
    display: flex;
    align-items: center;
    gap: 11px;
    height: 24px;
    margin-bottom: 6px;
    padding-left: 45px;
}

.tree .root {
    padding-left: 21px;
}

.row {
    flex: 1;
    display: flex;
    align-items: center;
    gap: 11px;
    height: 24px;
    min-width: 0;
    padding-left: 3px;
    overflow: hidden;
    background-color: #f0f0f0;
    white-space: nowrap;
}

.row svg:last-of-type {
    margin-right: 7px;
}

.root .row {
    gap: 0;
}

.row b {
    flex: 1;
    display: flex;
    align-items: center;
    gap: 11px;
    height: 20px;
    padding-left: 4px;
    background-color: #999;
    color: #fff;
}

.viewcube {
    position: absolute;
    top: 15px;
    right: 0;
    font-family: Roboto, sans-serif;
    font-size: 16px;
    font-weight: 500;
    text-anchor: middle;
}

.face {
    font-size: 12px;
    font-weight: bold;
    fill: #999;
}

.navbar {
    position: absolute;
    bottom: 5px;
    left: 560px;
    display: flex;
    align-items: center;
    gap: 8px;
    height: 30px;
    padding: 0 5px 0 4px;
    background-color: #f0f0f0;
}

.navbar button {
    min-width: 25px;
}

.navbar .caret {
    margin-left: 3px;
}

/* sketch palette */
.palette {
    position: absolute;
    top: 269px;
    right: 0;
    z-index: 5;
    width: 291px;
    border: 1px solid #bbb;
    border-right: none;
    background-color: #f0f0f0;
    font-size: 14px;
}

.palette-title {
    display: flex;
    align-items: center;
    gap: 13px;
    height: 30px;
    padding-left: 7px;
    border-bottom: 1px solid #c6c6c6;
    font-family: Roboto, sans-serif;
    font-size: 13px;
    color: #777;
}

.palette h3 {
    display: flex;
    align-items: center;
    gap: 5px;
    height: 37px;
    padding-left: 6px;
    font-weight: bold;
    color: #333;
}

.options {
    display: grid;
    grid-template-rows: repeat(12, 1fr);
    height: 450px;
    padding: 0 15px;
}

.options div,
.options label {
    display: flex;
    align-items: center;
    justify-content: space-between;
}

.options button {
    margin-left: auto;
}

.options input {
    appearance: none;
    width: 17px;
    height: 17px;
    margin: 0 2px 0 0;
    border: 1px solid #666;
    border-radius: 4px;
    background-image: linear-gradient(#fafafa, #d3d3d3);
}

.options input:checked {
    display: flex;
    justify-content: center;
    background-image: linear-gradient(#b5b5b5, #e3e3e3);
}

.options input:checked::after {
    content: "";
    width: 5px;
    height: 10px;
    border: solid #222;
    border-width: 0 2px 2px 0;
    transform: rotate(38deg);
}

.palette-foot {
    height: 46px;
    padding: 10px 0 0 173px;
    overflow: hidden;
    border-top: 1px solid #c6c6c6;
}

.palette-foot button {
    height: 25px;
    padding: 0 6px;
    border: 1px solid #b5b5b5;
    background-color: #e9e9e9;
    font-size: 15px;
    white-space: nowrap;
    color: #777;
}

/* timeline */
.timeline {
    display: flex;
    align-items: center;
    gap: 15px;
    height: 59px;
    padding: 0 16px 0 13px;
    background-color: #f0f0f0;
}

.feature {
    margin-left: 14px;
}

.settings {
    margin-left: auto;
}
```
